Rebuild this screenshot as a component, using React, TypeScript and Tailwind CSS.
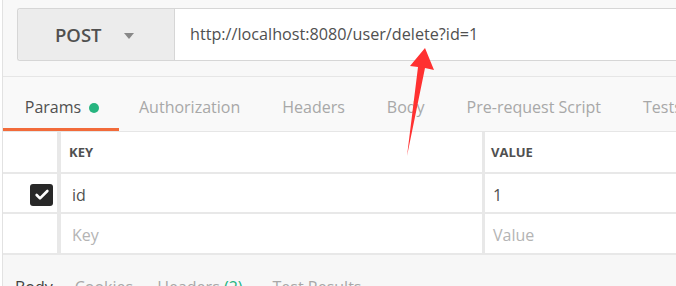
import { Check } from 'lucide-react';

const tabs = ['Authorization', 'Headers', 'Body', 'Pre-request Script', 'Tests'];

export default function App() {
  return (
    <div className="relative w-[676px] h-[286px] overflow-hidden bg-white pl-[2px] font-['Open_Sans',sans-serif]">
      <div className="h-full border-l border-[#e2e2e2] flex flex-col">
        {/* request bar */}
        <div className="h-[77px] shrink-0 bg-[#f8f8f8] border-b border-[#e6e6e6] pl-[14px] pt-[8px]">
          <div className="flex h-[53px] border border-[#d6d6d6] rounded-l-[3px] border-r-0">
            <div className="w-[157px] shrink-0 bg-[#ececec] border-r border-[#d6d6d6] flex items-center pl-[37px] rounded-l-[3px]">
              <span className="text-[18.5px] font-semibold text-[#505050]">POST</span>
              <span className="ml-[22px] mt-[2px] w-0 h-0 border-l-[5px] border-r-[5px] border-t-[6px] border-l-transparent border-r-transparent border-t-[#888]" />
            </div>
            <div className="flex-1 bg-white flex items-center pl-[15px] text-[16.2px] text-[#505050] whitespace-nowrap">
              http://localhost:8080/user/delete?id=1
            </div>
          </div>
        </div>

        {/* tabs */}
        <div className="h-[55px] shrink-0 bg-[#f9f9f9] flex items-stretch border-b border-[#e6e6e6] whitespace-nowrap">
          <div className="w-[116px] shrink-0 flex items-center justify-center gap-[8px] border-b-[3px] border-[#f26b3a] pt-[8px] pl-[2px]">
            <span className="text-[16px] text-[#505050]">Params</span>
            <span className="w-[10px] h-[10px] rounded-full bg-[#26b47f] mt-[2px]" />
          </div>
          {tabs.map((t, i) => (
            <div
              key={t}
              className={
                'shrink-0 flex items-center pt-[6px] text-[16px] text-[#a8a8a8] ' +
                (i === 0 ? 'ml-[20px]' : 'ml-[42px]')
              }
            >
              {t}
            </div>
          ))}
        </div>

        {/* params table */}
        <div className="bg-white">
          <div className="flex h-[42px] border-b-2 border-[#e8e8e8]">
            <div className="w-[58px] shrink-0 border-r-[4px] border-[#e8e8e8]" />
            <div className="w-[424px] shrink-0 border-r-[3px] border-[#e8e8e8] flex items-center pl-[8px] pt-[2px] text-[13px] font-bold text-[#505050]">
              KEY
            </div>
            <div className="flex-1 flex items-center pl-[6px] pt-[2px] text-[13px] font-bold text-[#505050]">VALUE</div>
          </div>
          <div className="flex h-[40px] border-b-2 border-[#e8e8e8]">
            <div className="w-[58px] shrink-0 border-r-[4px] border-[#e8e8e8] flex items-center justify-end pr-[4px] pt-[3px]">
              <span className="w-[23px] h-[22px] rounded-[3px] bg-[#282828] flex items-center justify-center">
                <Check size={16} strokeWidth={4} color="#fff" />
              </span>
            </div>
            <div className="w-[424px] shrink-0 border-r-[3px] border-[#e8e8e8] flex items-center pl-[11px] pt-[3px] text-[16px] text-[#505050]">
              id
            </div>
            <div className="flex-1 flex items-center pl-[8px] pt-[3px] text-[16px] text-[#505050]">1</div>
          </div>
          <div className="flex h-[41px] border-b-2 border-[#e8e8e8]">
            <div className="w-[58px] shrink-0 border-r-[4px] border-[#e8e8e8]" />
            <div className="w-[424px] shrink-0 border-r-[3px] border-[#e8e8e8] flex items-center pl-[11px] pt-[3px] text-[16px] text-[#b4b4b4]">
              Key
            </div>
            <div className="flex-1 flex items-center pl-[8px] pt-[3px] text-[16px] text-[#b4b4b4]">Value</div>
          </div>
        </div>

        {/* response tabs */}
        <div className="flex-1 bg-[#f7f7f7] flex items-start pt-[20px] pl-[12px] text-[16px] text-[#a8a8a8] whitespace-nowrap">
          <span className="text-[#404040]">Body</span>
          <span className="ml-[22px]">Cookies</span>
          <span className="ml-[24px]">
            Headers <span className="text-[#26b47f]">(2)</span>
          </span>
          <span className="ml-[30px]">Test Results</span>
        </div>
      </div>

      {/* red annotation arrow */}
      <svg className="absolute left-0 top-0 pointer-events-none" width="676" height="286">
        <polygon points="425,48 434,70 425,68 407,156 418,67 410,66" fill="#ff3131" />
      </svg>
    </div>
  );
}
